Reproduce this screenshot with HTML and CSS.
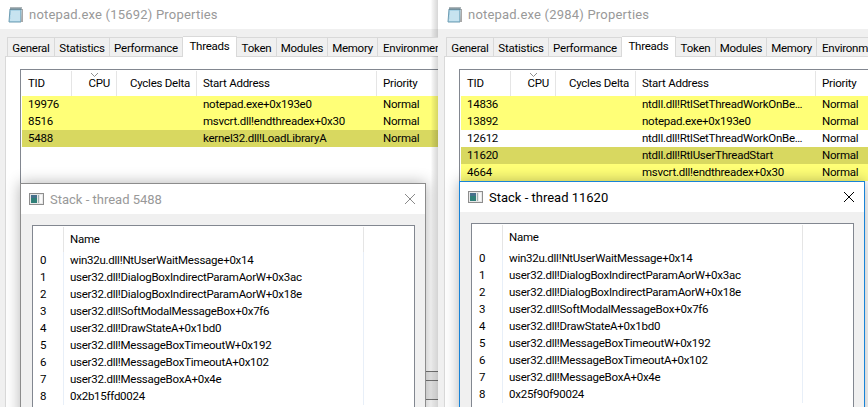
FILE: index.html
```html
<!DOCTYPE html>
<html lang="en">
<head>
    <meta charset="UTF-8">
    <title>Thread stacks</title>
    <link rel="stylesheet" href="styles.css">
</head>
<body>

    <!-- Left process window -->
    <div class="window window-left">
        <div class="titlebar">
            <svg class="app-icon" width="16" height="17" viewBox="0 0 16 17">
                <path d="M2 3h11v13H1z" fill="#a9d3e6" stroke="#6f9db3"/>
                <path d="M14 3h1v13h-2z" fill="#a8a8a8"/>
                <path d="M3 6h9M3 8h9M2.500 10h9.500M2.500 12h9.500M2 14h10" stroke="#e4f3f9"/>
                <path d="M3 1v3M5 1v3M7 1v3M9 1v3M11 1v3M13 1v3" stroke="#5b6a70"/>
            </svg>
            <span class="title-text">notepad.exe (15692) Properties</span>
        </div>
        <div class="tabs">
            <div class="tab">General</div>
            <div class="tab">Statistics</div>
            <div class="tab">Performance</div>
            <div class="tab tab-active">Threads</div>
            <div class="tab">Token</div>
            <div class="tab">Modules</div>
            <div class="tab">Memory</div>
            <div class="tab tab-last">Environment</div>
        </div>
        <div class="page">
            <div class="list">
                <div class="row head">
                    <div class="cell">TID</div>
                    <div class="cell num sorted">CPU
                        <svg class="sort-mark" width="7" height="4" viewBox="0 0 7 4"><path d="M0 0l3.500 3.500L7 0" fill="none" stroke="#8f8f8f"/></svg>
                    </div>
                    <div class="cell num">Cycles Delta</div>
                    <div class="cell">Start Address</div>
                    <div class="cell">Priority</div>
                </div>
                <div class="row hot">
                    <div class="cell">19976</div><div class="cell"></div><div class="cell"></div>
                    <div class="cell">notepad.exe+0x193e0</div><div class="cell">Normal</div>
                </div>
                <div class="row hot">
                    <div class="cell">8516</div><div class="cell"></div><div class="cell"></div>
                    <div class="cell">msvcrt.dll!endthreadex+0x30</div><div class="cell">Normal</div>
                </div>
                <div class="row hot-selected">
                    <div class="cell">5488</div><div class="cell"></div><div class="cell"></div>
                    <div class="cell">kernel32.dll!LoadLibraryA</div><div class="cell">Normal</div>
                </div>
            </div>
            <div class="behind-lines"></div>
        </div>

        <div class="dialog dialog-left">
            <div class="dialog-title">
                <svg class="dialog-icon" width="15" height="12" viewBox="0 0 15 12">
                    <rect x=".5" y=".5" width="14" height="11" fill="#e8e8e8" stroke="#8d8d8d"/>
                    <rect x="2" y="2" width="6" height="8" fill="#2f7f78"/>
                    <rect x="2" y="2" width="6" height="3" fill="#46708c"/>
                    <rect x="9" y="2" width="1" height="8" fill="#9fb0b0"/>
                    <rect x="11" y="2" width="2" height="8" fill="#fafafa"/>
                </svg>
                <span class="title-text">Stack - thread 5488</span>
                <svg class="close" width="10" height="10" viewBox="0 0 10 10"><path d="M0 0l10 10M10 0L0 10" stroke="#8a8a8a"/></svg>
            </div>
            <div class="dialog-body">
                <div class="stack">
                    <div class="stack-head"><div class="stack-no"></div><div class="stack-name">Name</div></div>
                    <div class="stack-row"><div class="stack-no">0</div><div class="stack-name">win32u.dll!NtUserWaitMessage+0x14</div></div>
                    <div class="stack-row"><div class="stack-no">1</div><div class="stack-name">user32.dll!DialogBoxIndirectParamAorW+0x3ac</div></div>
                    <div class="stack-row"><div class="stack-no">2</div><div class="stack-name">user32.dll!DialogBoxIndirectParamAorW+0x18e</div></div>
                    <div class="stack-row"><div class="stack-no">3</div><div class="stack-name">user32.dll!SoftModalMessageBox+0x7f6</div></div>
                    <div class="stack-row"><div class="stack-no">4</div><div class="stack-name">user32.dll!DrawStateA+0x1bd0</div></div>
                    <div class="stack-row"><div class="stack-no">5</div><div class="stack-name">user32.dll!MessageBoxTimeoutW+0x192</div></div>
                    <div class="stack-row"><div class="stack-no">6</div><div class="stack-name">user32.dll!MessageBoxTimeoutA+0x102</div></div>
                    <div class="stack-row"><div class="stack-no">7</div><div class="stack-name">user32.dll!MessageBoxA+0x4e</div></div>
                    <div class="stack-row"><div class="stack-no">8</div><div class="stack-name">0x2b15ffd0024</div></div>
                </div>
            </div>
        </div>
    </div>

    <!-- Right process window -->
    <div class="window window-right">
        <div class="titlebar">
            <svg class="app-icon" width="16" height="17" viewBox="0 0 16 17">
                <path d="M2 3h11v13H1z" fill="#a9d3e6" stroke="#6f9db3"/>
                <path d="M14 3h1v13h-2z" fill="#a8a8a8"/>
                <path d="M3 6h9M3 8h9M2.500 10h9.500M2.500 12h9.500M2 14h10" stroke="#e4f3f9"/>
                <path d="M3 1v3M5 1v3M7 1v3M9 1v3M11 1v3M13 1v3" stroke="#5b6a70"/>
            </svg>
            <span class="title-text">notepad.exe (2984) Properties</span>
        </div>
        <div class="tabs">
            <div class="tab">General</div>
            <div class="tab">Statistics</div>
            <div class="tab">Performance</div>
            <div class="tab tab-active">Threads</div>
            <div class="tab">Token</div>
            <div class="tab">Modules</div>
            <div class="tab">Memory</div>
            <div class="tab tab-last">Environment</div>
        </div>
        <div class="page">
            <div class="list">
                <div class="row head">
                    <div class="cell">TID</div>
                    <div class="cell num sorted">CPU
                        <svg class="sort-mark" width="7" height="4" viewBox="0 0 7 4"><path d="M0 0l3.500 3.500L7 0" fill="none" stroke="#8f8f8f"/></svg>
                    </div>
                    <div class="cell num">Cycles Delta</div>
                    <div class="cell">Start Address</div>
                    <div class="cell">Priority</div>
                </div>
                <div class="row hot">
                    <div class="cell">14836</div><div class="cell"></div><div class="cell"></div>
                    <div class="cell">ntdll.dll!RtlSetThreadWorkOnBe…</div><div class="cell">Normal</div>
                </div>
                <div class="row hot">
                    <div class="cell">13892</div><div class="cell"></div><div class="cell"></div>
                    <div class="cell">notepad.exe+0x193e0</div><div class="cell">Normal</div>
                </div>
                <div class="row">
                    <div class="cell">12612</div><div class="cell"></div><div class="cell"></div>
                    <div class="cell">ntdll.dll!RtlSetThreadWorkOnBe…</div><div class="cell">Normal</div>
                </div>
                <div class="row hot-selected">
                    <div class="cell">11620</div><div class="cell"></div><div class="cell"></div>
                    <div class="cell">ntdll.dll!RtlUserThreadStart</div><div class="cell">Normal</div>
                </div>
                <div class="row hot">
                    <div class="cell">4664</div><div class="cell"></div><div class="cell"></div>
                    <div class="cell">msvcrt.dll!endthreadex+0x30</div><div class="cell">Normal</div>
                </div>
            </div>
        </div>

        <div class="dialog dialog-right">
            <div class="dialog-title">
                <svg class="dialog-icon" width="15" height="12" viewBox="0 0 15 12">
                    <rect x=".5" y=".5" width="14" height="11" fill="#e8e8e8" stroke="#8d8d8d"/>
                    <rect x="2" y="2" width="6" height="8" fill="#2f7f78"/>
                    <rect x="2" y="2" width="6" height="3" fill="#46708c"/>
                    <rect x="9" y="2" width="1" height="8" fill="#9fb0b0"/>
                    <rect x="11" y="2" width="2" height="8" fill="#fafafa"/>
                </svg>
                <span class="title-text">Stack - thread 11620</span>
                <svg class="close" width="10" height="10" viewBox="0 0 10 10"><path d="M0 0l10 10M10 0L0 10" stroke="#000"/></svg>
            </div>
            <div class="dialog-body">
                <div class="stack">
                    <div class="stack-head"><div class="stack-no"></div><div class="stack-name">Name</div></div>
                    <div class="stack-row"><div class="stack-no">0</div><div class="stack-name">win32u.dll!NtUserWaitMessage+0x14</div></div>
                    <div class="stack-row"><div class="stack-no">1</div><div class="stack-name">user32.dll!DialogBoxIndirectParamAorW+0x3ac</div></div>
                    <div class="stack-row"><div class="stack-no">2</div><div class="stack-name">user32.dll!DialogBoxIndirectParamAorW+0x18e</div></div>
                    <div class="stack-row"><div class="stack-no">3</div><div class="stack-name">user32.dll!SoftModalMessageBox+0x7f6</div></div>
                    <div class="stack-row"><div class="stack-no">4</div><div class="stack-name">user32.dll!DrawStateA+0x1bd0</div></div>
                    <div class="stack-row"><div class="stack-no">5</div><div class="stack-name">user32.dll!MessageBoxTimeoutW+0x192</div></div>
                    <div class="stack-row"><div class="stack-no">6</div><div class="stack-name">user32.dll!MessageBoxTimeoutA+0x102</div></div>
                    <div class="stack-row"><div class="stack-no">7</div><div class="stack-name">user32.dll!MessageBoxA+0x4e</div></div>
                    <div class="stack-row"><div class="stack-no">8</div><div class="stack-name">0x25f90f90024</div></div>
                </div>
            </div>
        </div>
    </div>

</body>
</html>
```

FILE: styles.css
```css
/* General Reset */
* {
    margin: 0;
    padding: 0;
    box-sizing: border-box;
}

body {
    position: relative;
    width: 868px;
    height: 407px;
    overflow: hidden;
    background-color: #fff;
    color: #000;
    font-family: 'Roboto', 'Open Sans', sans-serif;
    font-size: 11.500px;
    letter-spacing: -0.25px;
}

/* Windows on the desktop */
.window {
    position: absolute;
    top: 0;
    height: 407px;
    overflow: hidden;
    display: flex;
    flex-direction: column;
    background-color: #f0f0f0;
}

.window-left {
    left: 0;
    width: 438px;
}

.window-right {
    left: 0;
    width: 868px;
    padding-left: 439px;
    background: linear-gradient(to right, transparent 431px, rgba(0, 0, 0, 0.04) 432px, rgba(0, 0, 0, 0.16) 438px, #f0f0f0 438px);
}

.titlebar {
    height: 29px;
    flex-shrink: 0;
    display: flex;
    align-items: center;
    gap: 5px;
    padding-left: 8px;
    background-color: #fff;
}

.window-right .titlebar {
    margin-left: -1px;
    padding-left: 9px;
}

.title-text {
    color: #999;
    font-size: 13px;
    letter-spacing: 0.2px;
}

.dialog-title .title-text {
    letter-spacing: 0;
}

/* Tabs */
.tabs {
    display: grid;
    grid-template-columns: 48px 55px 73px 54px 40px 51px 50px 70px;
    height: 27px;
    flex-shrink: 0;
    padding: 7px 0 0 7px;
    align-items: end;
    position: relative;
    z-index: 1;
}

.tab {
    height: 19px;
    line-height: 20px;
    text-align: center;
    white-space: nowrap;
    overflow: hidden;
    background-color: #f0f0f0;
    border: 1px solid #d9d9d9;
    border-left: none;
    border-bottom: none;
}

.tab:first-child {
    border-left: 1px solid #d9d9d9;
}

.tab-active {
    height: 21px;
    line-height: 19px;
    margin-bottom: -1px;
    background-color: #fff;
}

.tab-last {
    text-align: left;
    padding-left: 5px;
    border-right: none;
}

/* Tab page */
.page {
    flex: 1;
    position: relative;
    margin-left: 5px;
    padding: 12px 0 0 14px;
    background-color: #fff;
    border-left: 1px solid #d9d9d9;
    border-top: 1px solid #d9d9d9;
}

/* Thread list */
.list {
    width: 620px;
    height: 500px;
    padding: 1px 1px 0;
    border: 1px solid #828790;
}

.row {
    display: grid;
    grid-template-columns: 50px 45px 80px 180px 1fr;
    height: 17px;
    line-height: 17px;
}

.head {
    height: 25px;
    line-height: 25px;
}

.head .cell {
    border-right: 1px solid #e5e5e5;
}

.cell {
    position: relative;
    height: inherit;
    padding: 0 6px;
    white-space: nowrap;
}

.num {
    text-align: right;
}

.sort-mark {
    position: absolute;
    left: 19px;
    top: 2px;
}

.hot {
    background-color: #ffff77;
}

.hot-selected {
    background-color: #d8d860;
}

/* Leftover lines of whatever sits behind the windows */
.behind-lines {
    position: absolute;
    left: 419px;
    top: 314px;
    width: 13px;
    height: 29px;
    background: linear-gradient(#777, #777) 0 8px / 100% 1px no-repeat #eee;
    border-top: 1px solid #777;
    border-bottom: 1px solid #777;
}

/* Stack dialogs */
.dialog {
    position: absolute;
    width: 406px;
    height: 300px;
    display: flex;
    flex-direction: column;
    background-color: #f0f0f0;
    box-shadow: 0 0 14px rgba(0, 0, 0, 0.3);
}

.dialog-left {
    left: 20px;
    top: 183px;
    border: 1px solid #8c8c8c;
    z-index: 2;
}

.dialog-right {
    left: 459px;
    top: 181px;
    border: 1px solid #1883d7;
    z-index: 2;
}

.dialog-title {
    height: 30px;
    flex-shrink: 0;
    display: flex;
    align-items: center;
    gap: 6px;
    padding: 0 10px 0 8px;
    background-color: #fff;
}

.dialog-right .title-text {
    color: #000;
}

.close {
    margin-left: auto;
}

.dialog-body {
    flex: 1;
    padding: 11px 10px 0 11px;
}

.stack {
    height: 300px;
    padding-top: 1px;
    background-color: #fff;
    border: 1px solid #828790;
}

.stack-head, .stack-row {
    display: grid;
    grid-template-columns: 30px 301px;
}

.stack-head {
    height: 25px;
    line-height: 25px;
}

.stack-row {
    height: 17px;
    line-height: 17px;
}

.stack-no {
    padding-left: 7px;
}

.stack-name {
    padding-left: 6px;
    white-space: nowrap;
    border-left: 1px solid #e8eff8;
    border-right: 1px solid #e8eff8;
}

.stack-head .stack-name {
    border-color: #e5e5e5;
}
```
